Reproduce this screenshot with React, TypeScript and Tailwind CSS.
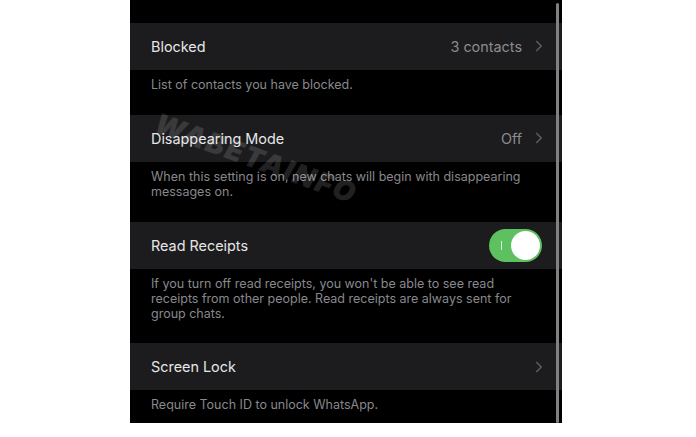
import { ChevronRight } from "lucide-react";

const Row = ({ label, value, toggle }: { label: string; value?: string; toggle?: boolean }) => (
  <div className="h-[47px] bg-[#1c1c1e] flex items-center pl-[21px] pr-[14px]">
    <span className="text-[14.4px] text-[#e6e6e8] flex-1">{label}</span>
    {toggle ? (
      <div className="w-[53px] h-[33px] mr-[6px] rounded-full bg-[#5cc15e] flex items-center justify-end p-[2px] relative">
        <span className="absolute left-[12px] top-[12px] w-[1px] h-[9px] bg-white/80" />
        <span className="w-[29px] h-[29px] rounded-full bg-white" />
      </div>
    ) : (
      <div className="flex items-center gap-[8px]">
        {value && <span className="text-[14.4px] text-[#8b8b90]">{value}</span>}
        <ChevronRight size={18} strokeWidth={2.2} className="text-[#5b5b5f]" />
      </div>
    )}
  </div>
);

const Note = ({ children, h }: { children: React.ReactNode; h: string }) => (
  <div className={`${h} bg-black px-[21px] pt-[7px] text-[12.5px] leading-[15px] text-[#88888d]`}>{children}</div>
);

export default function App() {
  return (
    <div className="w-[696px] h-[437px] bg-white flex pl-[130px]" style={{ fontFamily: "Inter, 'Liberation Sans', sans-serif" }}>
      <div className="w-[432px] h-[423px] bg-black flex flex-col relative overflow-hidden">
        <div className="h-[23px]" />
        <Row label="Blocked" value="3 contacts" />
        <Note h="h-[45px]">List of contacts you have blocked.</Note>
        <Row label="Disappearing Mode" value="Off" />
        <Note h="h-[60px]">When this setting is on, new chats will begin with disappearing messages on.</Note>
        <Row label="Read Receipts" toggle />
        <Note h="h-[74px]">
          If you turn off read receipts, you won't be able to see read receipts from other people. Read receipts are always sent for group chats.
        </Note>
        <Row label="Screen Lock" />
        <Note h="flex-1">Require Touch ID to unlock WhatsApp.</Note>
        <div className="absolute left-[26px] top-[108px] rotate-[20deg] origin-left text-[28px] leading-none font-black tracking-[2px] text-white/[0.13] italic select-none pointer-events-none">
          WABETAINFO
        </div>
        <div className="absolute right-[3px] top-[3px] bottom-0 w-[3px] bg-[#808082] rounded-full" />
      </div>
    </div>
  );
}
